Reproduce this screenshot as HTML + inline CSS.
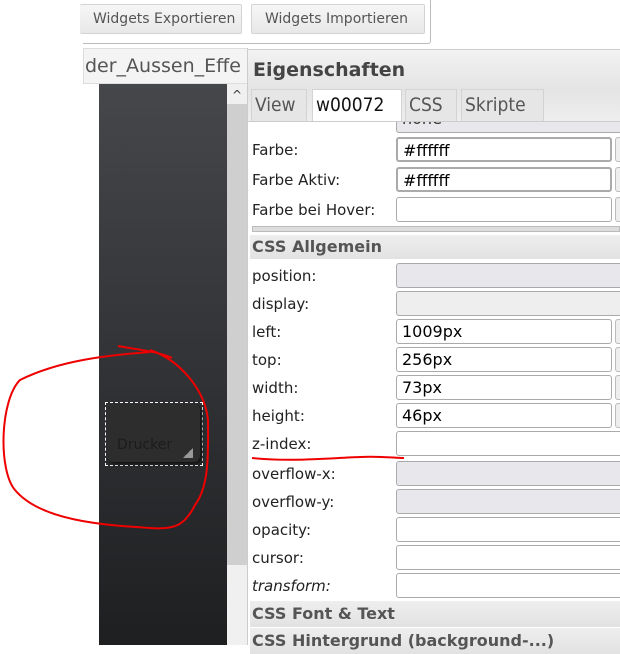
<!DOCTYPE html><html><head><style>
body{margin:0;width:620px;height:645px;overflow:hidden;background:#fff;position:relative;font-family:"DejaVu Sans","Liberation Sans",sans-serif;}
div{position:absolute;box-sizing:border-box}
.btn{top:4px;height:30px;border:1px solid #d3d3d3;border-radius:2px;background:linear-gradient(#f6f6f6,#e8e8e8);font-size:14px;color:#555;line-height:28px;padding-left:13px}
.l{left:252px;font-size:15px;color:#222;height:28px;line-height:28px}
.in{left:396px;width:216px;height:25px;border:1px solid #aaa;border-radius:3px;background:#fff;font-size:16px;padding-left:5px;line-height:23px;color:#000}
.sel{background:#e8e8ec}
.sb{left:615px;width:10px;height:25px;border:1px solid #bbb;border-radius:3px;background:#eee}
.hd{left:250px;width:370px;height:24px;background:linear-gradient(#eee,#e2e2e2);font-weight:bold;color:#555;font-size:16px;line-height:24px;padding-left:2px}
.tab{top:89px;height:32px;border:1px solid #d3d3d3;border-bottom:none;background:#e6e6e6;font-size:19px;color:#555;line-height:31px;padding:0 3px;font-family:"DejaVu Sans Condensed","DejaVu Sans",sans-serif;overflow:hidden;white-space:nowrap}
</style></head><body>
<div style="left:83px;top:0;width:348px;height:44px;border:1px solid #bbb;border-top:none;border-left:none;border-radius:0 0 3px 0"></div>
<div class="btn" style="left:80px;width:162px;border-left:none;padding-left:13px">Widgets Exportieren</div>
<div class="btn" style="left:251px;width:174px">Widgets Importieren</div>
<div style="left:83px;top:48px;width:165px;height:36px;border:1px solid #ddd;background:#f4f4f4;font-size:19px;color:#555;line-height:34px;overflow:hidden;white-space:nowrap;text-indent:-2px"><span style="position:relative;left:3px">der_Aussen_Effe</span></div>
<div style="left:99px;top:84px;width:128px;height:561px;background:linear-gradient(#45474b,#1e1f21)"></div>
<div style="left:227px;top:84px;width:20px;height:481px;background:#cfcfcf"></div>
<div style="left:227px;top:84px;width:20px;height:20px;background:#f0f0f0;font-size:12px;text-align:center;line-height:22px;color:#333">^</div>
<div style="left:227px;top:565px;width:20px;height:80px;background:#f0f0f0"></div>
<div style="left:105px;top:402px;width:98px;height:64px;border:1px dashed #fff"></div>
<div style="left:107px;top:404px;width:93px;height:58px;background:#2d2d2d;border-radius:6px;box-shadow:2px 2px 3px #111;font-size:14px;color:#1c1c1c;padding:33px 0 0 10px">Drucker</div>
<div style="left:247px;top:48px;width:373px;height:597px;border-left:1px solid #ccc;background:#fff"></div>
<div style="left:248px;top:49px;width:372px;height:40px;background:linear-gradient(#f2f2f2,#e4e4e4);font-weight:bold;font-size:19px;color:#444;line-height:40px;padding-left:5px;border-top:1px solid #ccc">Eigenschaften</div>
<div style="left:396px;top:108px;width:230px;height:25px;border:1px solid #aaa;border-radius:0 0 3px 3px;background:#e8e8ec;font-size:16px;padding-left:5px;line-height:20px;color:#333">none</div>
<div style="left:248px;top:108px;width:148px;height:13px;font-size:15px;color:#222;padding-left:4px;line-height:14px;overflow:hidden">Stil:</div>
<div style="left:248px;top:88px;width:372px;height:33px;background:linear-gradient(#e4e4e4,#eee)"></div>
<div class="tab" style="left:251px;width:56px">View</div>
<div class="tab" style="left:312px;width:90px;background:#fff;color:#111;height:33px">w00072</div>
<div class="tab" style="left:405px;width:52px">CSS</div>
<div class="tab" style="left:461px;width:83px">Skripte</div>
<div style="left:248px;top:121px;width:372px;height:1px;background:#ccc"></div>
<div class="l" style="top:136px">Farbe:</div><div class="in" style="top:137px;border-width:2px">#ffffff</div><div class="sb" style="top:137px"></div>
<div class="l" style="top:166px">Farbe Aktiv:</div><div class="in" style="top:167px;border-width:2px">#ffffff</div><div class="sb" style="top:167px"></div>
<div class="l" style="top:196px">Farbe bei Hover:</div><div class="in" style="top:197px"></div><div class="sb" style="top:197px"></div>
<div style="left:252px;top:226px;width:368px;height:6px;background:#ddd;border:1px solid #bbb"></div>
<div class="hd" style="top:235px">CSS Allgemein</div>
<div class="l" style="top:262px">position:</div><div class="in sel" style="top:263px;width:230px"></div>
<div class="l" style="top:290px">display:</div><div class="in sel" style="top:291px;width:230px;background:#eee"></div>
<div class="l" style="top:318px">left:</div><div class="in" style="top:319px">1009px</div><div class="sb" style="top:319px"></div>
<div class="l" style="top:346px">top:</div><div class="in" style="top:347px">256px</div><div class="sb" style="top:347px"></div>
<div class="l" style="top:374px">width:</div><div class="in" style="top:375px">73px</div><div class="sb" style="top:375px"></div>
<div class="l" style="top:402px">height:</div><div class="in" style="top:403px">46px</div><div class="sb" style="top:403px"></div>
<div class="l" style="top:430px">z-index:</div><div class="in" style="top:431px;width:230px"></div>
<div class="l" style="top:460px">overflow-x:</div><div class="in sel" style="top:461px;width:230px"></div>
<div class="l" style="top:488px">overflow-y:</div><div class="in sel" style="top:489px;width:230px"></div>
<div class="l" style="top:516px">opacity:</div><div class="in" style="top:517px;width:230px"></div>
<div class="l" style="top:544px">cursor:</div><div class="in" style="top:545px;width:230px"></div>
<div class="l" style="top:572px;font-style:italic">transform:</div><div class="in" style="top:573px;width:230px"></div>
<div class="hd" style="top:601px;height:26px;line-height:26px">CSS Font &amp; Text</div>
<div class="hd" style="top:628px;height:26px;line-height:26px">CSS Hintergrund (background-...)</div>
<svg style="position:absolute;left:0;top:0" width="620" height="645"><g fill="none" stroke="#e00" stroke-width="2">
<path d="M118 346 C140 350 160 352 172 358 M150 352 C110 355 60 360 20 380 C0 400 -2 470 15 490 C40 520 100 525 150 528 C175 530 185 525 195 505 C210 485 208 450 208 420 C205 390 180 360 150 350"/>
<path d="M252 458 C290 462 330 458 360 457 C380 456 395 458 404 458"/>
</g></svg>
<div style="left:183px;top:448px;width:10px;height:10px;background:linear-gradient(135deg,transparent 50%,#999 50%)"></div>
</body></html>
